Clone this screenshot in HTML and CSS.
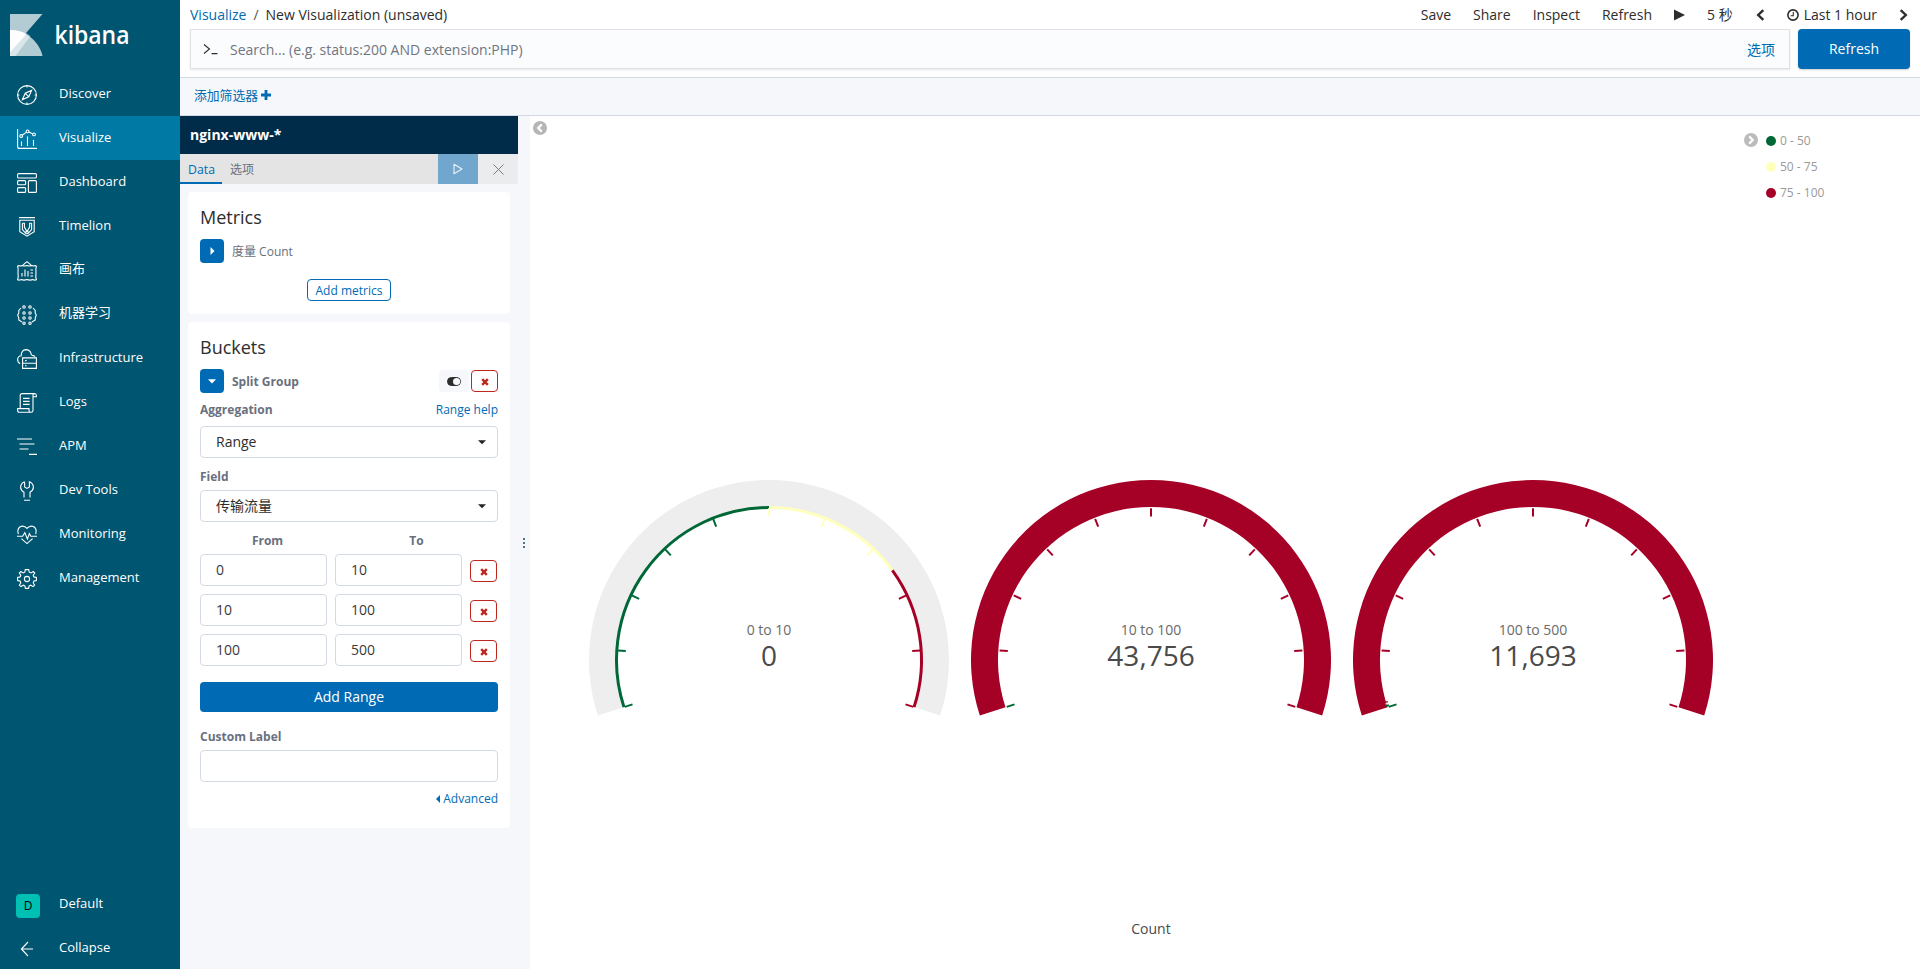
FILE: index.html
```html
<!DOCTYPE html>
<html lang="zh-CN">
<head>
<meta charset="utf-8">
<title>Kibana</title>
<link rel="stylesheet" href="styles.css">
</head>
<body>
<svg class="defs" aria-hidden="true">
  <symbol id="ring" viewBox="-180 -180 360 240" overflow="visible">
    <path d="M-171.19 55.62A180 180 0 1 1 171.19 55.62L145.51 47.28A153 153 0 1 0 -145.51 47.28Z"/>
  </symbol>
  <symbol id="times" viewBox="0 0 8 8"><path d="M1.2 1.2 6.8 6.8M6.8 1.2 1.2 6.8" stroke="currentColor" stroke-width="2.4"/></symbol>
</svg>
<div class="app">
  <nav class="sidebar">
    <a class="brand">
      <svg width="150" height="50" viewBox="0 0 150 50">
        <path d="M0 0H32.5L0 37.5Z" fill="#fff" fill-opacity=".7"/>
        <path d="M0 16C14 16 29 26 32.5 42H0Z" fill="#fff" fill-opacity=".7"/>
        <path d="M0 16C6 16 11.5 17.4 16.5 20L0 38.5Z" fill="#fff"/>
        <path d="M16.5 19L20.5 22L5.5 42H0V38.5Z" fill="#fff" fill-opacity=".5"/>
        <text class="wordmark" x="44.5" y="30.2" textLength="75" lengthAdjust="spacingAndGlyphs">kibana</text>
      </svg>
    </a>
    <a class="nav"><svg class="ico" viewBox="0 0 20 20"><circle cx="10" cy="10" r="9.4"/><path d="M14.6 5.4 11.8 11.8 5.4 14.6 8.2 8.2ZM10 .6v1.8M10 17.6v1.8M.6 10h1.8M17.6 10h1.8M8.4 8.4l3.2 3.2"/></svg><span>Discover</span></a>
    <a class="nav active"><svg class="ico" viewBox="0 0 20 20"><path d="M.6 0V17.4Q.6 19.4 2.6 19.4H20M4.5 12.5V17M10.5 7.5V17M16.5 11V17M5.4 6 9.3 3.4M11.9 3 15.5 4.8"/><circle cx="4.2" cy="7" r="1.4"/><circle cx="10.6" cy="2.4" r="1.4"/><circle cx="17" cy="5.4" r="1.4"/></svg><span>Visualize</span></a>
    <a class="nav"><svg class="ico" viewBox="0 0 20 20"><rect x=".6" y=".6" width="18.8" height="4.4" rx="1"/><rect x=".6" y="7.6" width="8" height="4.2" rx="1"/><rect x=".6" y="14.6" width="8" height="4.8" rx="1"/><rect x="11.4" y="7.6" width="8" height="11.8" rx="1"/></svg><span>Dashboard</span></a>
    <a class="nav"><svg class="ico" viewBox="0 0 20 20"><path d="M2 .6H18M2.8 3.2H17.2V14.6L10 19.2 2.8 14.6ZM5.4 6.2H7.4V10L10 14.6 12.6 10V6.2H14.6M5.4 6.2V12.5L8.8 16.4M14.6 6.2V12.5L11.2 16.4"/><circle cx="10" cy="15.4" r="1.3"/></svg><span>Timelion</span></a>
    <a class="nav"><svg class="ico" viewBox="0 0 20 20"><path d="M.6 5.4Q1.6 4.2 3 5 5 4.2 7 5 10 4.2 13 5 15 4.2 17 5 18.6 4.2 19.4 5.4 18.4 8 19 12 18.4 16 19.4 18.8 17.4 19.6 16 18.6 13 19.6 10 18.6 7 19.6 4 18.6 2.4 19.6 .6 18.8 1.6 16 1 12 1.6 8 .6 5.4ZM5.4 4.6 9 1.4Q10 .3 11 1.4L14.6 4.6M5 12V15.5M8 8.5V15.5M11 10V15.5M13.4 9H16M13.4 12H16M13.4 15H16"/></svg><span class="zh">画布</span></a>
    <a class="nav"><svg class="ico" viewBox="0 0 20 20"><circle cx="7" cy="2" r="1.2"/><circle cx="13" cy="2" r="1.2"/><circle cx="7" cy="8" r="1.2"/><circle cx="13" cy="8" r="1.2"/><circle cx="7" cy="13" r="1.2"/><circle cx="13" cy="13" r="1.2"/><circle cx="7" cy="18.2" r="1.2"/><circle cx="13" cy="18.2" r="1.2"/><path d="M4 3 1.8 5.4V8L.7 10 1.8 13V15L5 17M16 3 18.2 5.4V8L19.3 10 18.2 13V15L15 17"/></svg><span class="zh">机器学习</span></a>
    <a class="nav"><svg class="ico" viewBox="0 0 20 20"><path d="M3.2 14.6Q.6 13.4.6 10.4 1 7 4.2 6.8 4.2 1 9 .6 13 .8 14 4.4 14 5.6 15.2 6.4 17.4 6.6 18 7.6M5.6 8.9H19.4V19.4H5.6ZM5.6 14.2H19.4M8 11.6H9.6M8 16.8H9.6"/></svg><span>Infrastructure</span></a>
    <a class="nav"><svg class="ico" viewBox="0 0 20 20"><path d="M3.2 15.2V2.6Q3.2.6 5.2.6H17.6Q19.4.6 19.4 2.6V3.8H16V17.4Q16 19.2 14 19.2H2.4Q.6 19.2.6 17.4V15.6H12V17.4Q12 19.2 14 19.2M16 3.8V2.4Q16 .6 17.6.6M6 5.4H12.6M6 8.4H12.6M6 11.4H12.6"/></svg><span>Logs</span></a>
    <a class="nav"><svg class="ico" viewBox="0 0 20 20"><path d="M0 2H15M2.5 7H17.5M2.5 12H11.5M12 17.4H20"/></svg><span>APM</span></a>
    <a class="nav"><svg class="ico" viewBox="0 0 20 20"><path d="M7.6.8V6L10 7.4 12.4 6V.8Q16.4 2.4 16.4 6.4 16.2 9.6 13 11.2V16.4M7.6.8Q3.6 2.4 3.6 6.4 3.8 9.6 7 11.2V16.4M7 19.2H13"/></svg><span>Dev Tools</span></a>
    <a class="nav"><svg class="ico" viewBox="0 0 20 20"><path d="M1.4 9Q-.2 4.6 2.8 2 6.6-.4 10 3.4 13.4-.4 17.2 2 20.2 4.6 18.6 9M0 11.2H5.6L7.8 7.6 10.4 14 12.4 8.6 13.8 11.2H20M4.4 13.6 10 18.6 15.6 13.6"/></svg><span>Monitoring</span></a>
    <a class="nav"><svg class="ico" viewBox="0 0 20 20"><path d="M8.3.6H11.7L12.3 3.2 14 3.9 16.3 2.5 17.8 4 16.2 6.2 16.9 7.9 19.4 8.4V11.6L16.9 12.1 16.2 13.8 17.6 16.1 16.1 17.6 13.8 16.2 12.1 16.9 11.6 19.4H8.4L7.9 16.9 6.2 16.2 3.9 17.6 2.4 16.1 3.8 13.8 3.1 12.1.6 11.6V8.4L3.1 7.9 3.8 6.2 2.3 4 3.8 2.5 6.1 3.9 7.8 3.2Z"/><circle cx="10" cy="10" r="2.6"/></svg><span>Management</span></a>
    <div class="nav-end">
      <a class="nav"><b class="space">D</b><span>Default</span></a>
      <a class="nav"><svg class="ico" viewBox="0 0 20 20"><path d="M4.4 10H16M11 3 4.4 10 11 17"/></svg><span>Collapse</span></a>
    </div>
  </nav>

  <div class="content">
    <header class="top">
      <div class="crumbs"><a>Visualize</a><i>/</i><span>New Visualization (unsaved)</span></div>
      <div class="menu">
        <span>Save</span><span>Share</span><span>Inspect</span><span>Refresh</span>
        <svg class="m-play" width="11" height="12"><path d="M0 .5 11 6 0 11.5Z"/></svg>
        <span class="m-sec">5 秒</span>
        <svg class="m-prev" width="9" height="12" viewBox="0 0 9 12"><path d="M7.3 1.2 2.2 6 7.3 10.8" fill="none" stroke="#2d2d2d" stroke-width="2.4"/></svg>
        <svg class="m-clock" width="12" height="12" viewBox="0 0 12 12"><circle cx="6" cy="6" r="5.1" fill="none" stroke="#2d2d2d" stroke-width="1.6"/><path d="M6.3 3V6.7H3.6" fill="none" stroke="#2d2d2d" stroke-width="1.1"/></svg>
        <span class="m-time">Last 1 hour</span>
        <svg class="m-next" width="9" height="12" viewBox="0 0 9 12"><path d="M1.7 1.2 6.8 6 1.7 10.8" fill="none" stroke="#2d2d2d" stroke-width="2.4"/></svg>
      </div>
    </header>
    <div class="query">
      <div class="search">
        <svg width="16" height="12" viewBox="0 0 16 12"><path d="M1 1.5 6.5 6 1 10.5M8.5 10.6H14.5" fill="none" stroke="#2d2d2d" stroke-width="1.1"/></svg>
        <span class="placeholder">Search... (e.g. status:200 AND extension:PHP)</span>
        <a class="opts">选项</a>
      </div>
      <button class="refresh">Refresh</button>
    </div>
    <div class="filters"><a>添加筛选器</a><svg width="10" height="10"><path d="M5 0V10M0 5H10" stroke="#006bb4" stroke-width="2.8"/></svg></div>

    <div class="work">
      <aside class="editor">
        <h1>nginx-www-*</h1>
        <div class="tabs">
          <a class="tab on">Data</a><a class="tab">选项</a>
          <span class="apply"><svg width="10" height="12" viewBox="0 0 10 12"><path d="M1 1.2 9 6 1 10.8Z" fill="none" stroke="#fff" stroke-opacity=".85" stroke-width="1.1" stroke-linejoin="round"/></svg></span>
          <span class="discard"><svg width="11" height="11"><path d="M.5 .5 10.5 10.5M10.5 .5 .5 10.5" stroke="#7b7c7e" stroke-width="1"/></svg></span>
        </div>
        <section class="card metrics">
          <h2>Metrics</h2>
          <div class="agg"><span class="toggle"><svg width="5" height="8"><path d="M.5 0 4.5 4 .5 8Z" fill="#fff"/></svg></span><span class="agg-name">度量 Count</span></div>
          <button class="add">Add metrics</button>
        </section>
        <section class="card buckets">
          <h2>Buckets</h2>
          <div class="agg">
            <span class="toggle"><svg width="8" height="5"><path d="M0 .3H8L4 4.5Z" fill="#fff"/></svg></span><b class="agg-name">Split Group</b>
            <span class="switch"><svg width="14" height="9" viewBox="0 0 14 9"><rect x=".5" y=".5" width="13" height="8" rx="4" fill="#2d2d2d" stroke="#2d2d2d"/><circle cx="9.6" cy="4.5" r="3.6" fill="#f5f7fa"/></svg></span>
            <span class="del"><svg width="8" height="8"><use href="#times"/></svg></span>
          </div>
          <div class="row lab"><label>Aggregation</label><a>Range help</a></div>
          <div class="select"><span>Range</span><svg width="8" height="5"><path d="M0 .3H8L4 4.3Z" fill="#222"/></svg></div>
          <div class="row lab field"><label>Field</label></div>
          <div class="select"><span>传输流量</span><svg width="8" height="5"><path d="M0 .3H8L4 4.3Z" fill="#222"/></svg></div>
          <div class="ranges">
            <label>From</label><label class="to">To</label><i></i>
            <div class="input">0</div><div class="input">10</div><span class="del"><svg width="8" height="8"><use href="#times"/></svg></span>
            <div class="input">10</div><div class="input">100</div><span class="del"><svg width="8" height="8"><use href="#times"/></svg></span>
            <div class="input">100</div><div class="input">500</div><span class="del"><svg width="8" height="8"><use href="#times"/></svg></span>
          </div>
          <button class="add-range">Add Range</button>
          <div class="row lab"><label>Custom Label</label></div>
          <div class="input wide"></div>
          <a class="advanced"><svg width="4" height="8"><path d="M4 0V8L0 4Z" fill="#006bb4"/></svg>Advanced</a>
        </section>
      </aside>
      <div class="resizer"><i></i><i></i><i></i></div>
      <main class="vis">
        <svg class="fold" width="14" height="14" viewBox="0 0 14 14"><circle cx="7" cy="7" r="7" fill="#b6b6b6"/><path d="M8.8 3.4 5.2 7 8.8 10.6" fill="none" stroke="#fff" stroke-width="2.2"/></svg>
        <div class="chart">
          <div class="gauges">
            <svg class="gauge" viewBox="-191 -181 382 240">
              <use href="#ring" x="-180" y="-180" width="360" height="240" fill="#eee"/>
              <g fill="none" stroke-width="3">
                <path stroke="#006837" d="M-145.04 47.13A152.5 152.5 0 0 1 0-152.5"/>
                <path stroke="#ffffbe" d="M0-152.5A152.5 152.5 0 0 1 123.38-89.64"/>
                <path stroke="#a50026" d="M123.38-89.64A152.5 152.5 0 0 1 145.04 47.13"/>
              </g>
              <g stroke="#006837" stroke-width="2">
                <path d="M0-151.7V-143.5" transform="rotate(-108)"/><path d="M0-151.7V-143.5" transform="rotate(-86.4)"/><path d="M0-151.7V-143.5" transform="rotate(-64.8)"/><path d="M0-151.7V-143.5" transform="rotate(-43.2)"/><path d="M0-151.7V-143.5" transform="rotate(-21.6)"/>
              </g>
              <g stroke="#ffffbe" stroke-width="2">
                <path d="M0-151.7V-143.5"/><path d="M0-151.7V-143.5" transform="rotate(21.6)"/><path d="M0-151.7V-143.5" transform="rotate(43.2)"/>
              </g>
              <g stroke="#a50026" stroke-width="2">
                <path d="M0-151.7V-143.5" transform="rotate(64.8)"/><path d="M0-151.7V-143.5" transform="rotate(86.4)"/><path d="M0-151.7V-143.5" transform="rotate(108)"/>
              </g>
              <text class="g-label" y="-25">0 to 10</text><text class="g-value" y="5.5">0</text>
            </svg>
            <svg class="gauge" viewBox="-191 -181 382 240">
              <use href="#ring" x="-180" y="-180" width="360" height="240" fill="#a50026"/>
              <g id="ticks" stroke="#a50026" stroke-width="2">
                <path stroke="#006837" d="M0-151.7V-143.5" transform="rotate(-108)"/>
                <path d="M0-151.7V-143.5" transform="rotate(-86.4)"/><path d="M0-151.7V-143.5" transform="rotate(-64.8)"/><path d="M0-151.7V-143.5" transform="rotate(-43.2)"/><path d="M0-151.7V-143.5" transform="rotate(-21.6)"/><path d="M0-151.7V-143.5"/><path d="M0-151.7V-143.5" transform="rotate(21.6)"/><path d="M0-151.7V-143.5" transform="rotate(43.2)"/><path d="M0-151.7V-143.5" transform="rotate(64.8)"/><path d="M0-151.7V-143.5" transform="rotate(86.4)"/><path d="M0-151.7V-143.5" transform="rotate(108)"/>
              </g>
              <text class="g-label" y="-25">10 to 100</text><text class="g-value" y="5.5">43,756</text>
            </svg>
            <svg class="gauge" viewBox="-191 -181 382 240">
              <use href="#ring" x="-180" y="-180" width="360" height="240" fill="#a50026"/>
              <use href="#ticks"/>
              <path d="M0-154V-151" transform="rotate(-107.4)" stroke="#006837" stroke-width="2"/>
              <path d="M0-154V-151" transform="rotate(-106.6)" stroke="#ffffbe" stroke-width="1"/>
              <path d="M0-154V-151" transform="rotate(-106)" stroke="#a50026" stroke-width="1.4"/>
              <text class="g-label" y="-25">100 to 500</text><text class="g-value" y="5.5">11,693</text>
            </svg>
          </div>
          <div class="axis">Count</div>
        </div>
        <div class="legend">
          <svg width="14" height="14" viewBox="0 0 14 14"><circle cx="7" cy="7" r="7" fill="#bbb"/><path d="M5.2 3.4 8.8 7 5.2 10.6" fill="none" stroke="#fff" stroke-width="2.2"/></svg>
          <ul>
            <li><i class="dot green"></i>0 - 50</li>
            <li><i class="dot yellow"></i>50 - 75</li>
            <li><i class="dot red"></i>75 - 100</li>
          </ul>
        </div>
      </main>
    </div>
  </div>
</div>
</body>
</html>
```
FILE: styles.css
```css
* { box-sizing: border-box; }
body { margin: 0; font: 14px/20px "Open Sans", "Noto Sans CJK SC", sans-serif; color: #2d2d2d; background: #fff; }
a { color: #006bb4; text-decoration: none; }
i { font-style: normal; }
svg { display: block; flex: none; }
button { font: inherit; padding: 0; border: 0; display: block; }
.defs { position: absolute; width: 0; height: 0; }
.app { display: flex; width: 1920px; height: 969px; overflow: hidden; }

.sidebar { width: 180px; flex: none; background: #005571; display: flex; flex-direction: column; }
.brand { height: 72px; padding: 14px 0 0 10px; }
.wordmark { font: 600 25px "Open Sans", sans-serif; fill: #fff; }
.nav { height: 44px; display: flex; align-items: center; padding-left: 17px; color: #fff; font-size: 13px; line-height: 18px; }
.nav.active { background: #0079a5; }
.nav span { margin-left: 22px; padding-bottom: 2px; }
.nav .zh { padding-bottom: 4px; }
.ico { width: 20px; height: 20px; fill: none; stroke: #fff; stroke-width: 1.1; margin-top: 2px; overflow: visible; }
.nav-end { margin-top: auto; margin-bottom: -1px; }
.space { width: 24px; height: 24px; margin: 3px -3px 0 -1px; border-radius: 4px; background: #00bfb3; color: #000; font-weight: 400; font-size: 12px; line-height: 24px; text-align: center; }

.content { flex: 1; display: flex; flex-direction: column; min-width: 0; }
.top { height: 29px; display: flex; justify-content: space-between; padding: 5px 12px 0 10px; }
.crumbs i { margin: 0 7px; color: #555; }
.menu { display: flex; align-items: center; height: 20px; }
.menu span { margin-right: 22px; }
.menu .m-play { margin: 0 22px 0 0; fill: #2d2d2d; }
.menu .m-sec { margin-right: 23px; }
.menu .m-prev { margin-right: 22px; }
.menu .m-clock { margin-right: 5px; }
.menu .m-time { margin-right: 22px; }
.query { height: 48px; display: flex; gap: 8px; padding: 0 10px 8px; }
.search { flex: 1; display: flex; align-items: center; border: 1px solid #dfe1e5; background: #fbfcfd; box-shadow: 0 1px 2px #0000001a; padding: 0 14px 0 12px; }
.placeholder { flex: 1; margin-left: 11px; color: #707580; padding-top: 1px; }
.opts { padding-top: 2px; }
.refresh { width: 112px; height: 40px; background: #006bb4; color: #fff; border-radius: 4px; box-shadow: 0 1px 2px #0003; }
.filters { height: 39px; border-top: 1px solid #d3dae6; border-bottom: 1px solid #d3dae6; background: #f5f7fa; display: flex; align-items: center; gap: 3px; padding: 0 14px 3px; font-size: 12.8px; }

.work { flex: 1; display: flex; }
.editor { width: 338px; background: #f5f7fb; }
.editor h1 { margin: 0; height: 38px; background: #002b49; color: #fff; font-size: 14px; line-height: 37px; padding-left: 10px; }
.tabs { height: 30px; background: #e4e4e4; display: flex; font-size: 12px; line-height: 31px; }
.tab { padding: 0 8px; color: #69707d; height: 30px; }
.tab.on { width: 42px; color: #006bb4; border-bottom: 2px solid #006bb4; font-size: 12.3px; }
.apply { width: 40px; margin-left: auto; background: #72a7cd; }
.discard { width: 40px; background: #ebecee; }
.apply, .discard { display: flex; align-items: center; justify-content: center; }
.card { margin: 8px 8px 0; padding: 12px; background: #fff; border-radius: 4px; }
.card h2 { margin: 0; font-weight: 400; font-size: 18px; line-height: 26px; }
.metrics { height: 122px; }
.buckets { height: 506px; }
.agg { display: flex; align-items: center; height: 24px; margin-top: 9px; font-size: 12px; color: #69707d; }
.toggle { width: 24px; height: 24px; border-radius: 4px; background: #006bb4; display: flex; align-items: center; justify-content: center; }
.agg-name { flex: 1; margin-left: 8px; padding-top: 1px; }
.add { width: 84px; height: 22px; margin: 16px auto 0; border: 1px solid #006bb4; border-radius: 4px; background: #fff; color: #006bb4; font-size: 12px; line-height: 21px; }
.switch { width: 30px; height: 22px; background: #f5f7fa; margin-right: 2px; display: flex; align-items: center; justify-content: center; border-radius: 4px; }
.del { width: 27px; height: 22px; border: 1px solid #bd271e; border-radius: 4px; color: #bd271e; display: flex; align-items: center; justify-content: center; padding-top: 2px; }
.lab { display: flex; justify-content: space-between; font-size: 12px; line-height: 18px; }
.lab label, .ranges label { font-weight: 700; color: #69707d; }
.agg + .lab { margin-top: 8px; margin-bottom: 7px; }
.lab.field { margin: 10px 0 4px; }
.select, .input { height: 32px; border: 1px solid #d3dae6; border-radius: 4px; background: #fff; padding: 0 15px; line-height: 30px; color: #3a3a3a; }
.select { display: flex; justify-content: space-between; align-items: center; padding-right: 11px; color: #2d2d2d; }
.ranges { display: grid; grid-template-columns: 127px 127px 27px; column-gap: 8px; row-gap: 8px; margin-top: 10px; align-items: center; }
.ranges label { text-align: center; font-size: 12px; line-height: 18px; margin-bottom: -4px; padding-left: 8px; }
.ranges .to { padding-left: 36px; }
.ranges .del { margin-top: 2px; }
.add-range { width: 298px; height: 30px; margin: 16px 0; background: #006bb4; color: #fff; border-radius: 4px; }
.input.wide { margin-top: 4px; }
.advanced { display: flex; align-items: center; justify-content: flex-end; gap: 3px; font-size: 12px; line-height: 18px; margin-top: 8px; }
.resizer { width: 12px; background: #f5f7fb; display: flex; flex-direction: column; align-items: center; justify-content: center; gap: 2px; padding-top: 1px; }
.resizer i { width: 2px; height: 2px; background: #4f7690; }

.vis { flex: 1; display: flex; align-items: flex-start; padding-left: 3px; }
.fold { margin-top: 5px; }
.chart { margin-left: 31px; width: 1146px; height: 853px; display: flex; flex-direction: column; }
.gauges { display: flex; margin-top: 362.6px; }
.gauge { width: 382px; height: 240px; }
.gauge text { text-anchor: middle; font-family: "Open Sans", sans-serif; }
.g-label { font-size: 14px; fill: #6a6a6a; }
.g-value { font-size: 28px; fill: #4a4a4a; }
.axis { text-align: center; margin-top: 200px; color: #4a4a4a; }
.legend { display: flex; margin: 17px 0 0 20px; color: #999; font-size: 12px; }
.legend ul { list-style: none; margin: -2px 0 0 8px; padding: 0; }
.legend li { display: flex; align-items: center; height: 20px; margin-bottom: 6px; gap: 4px; }
.dot { width: 10px; height: 10px; border-radius: 50%; }
.green { background: #006837; }
.yellow { background: #ffffbe; }
.red { background: #a50026; }
```
